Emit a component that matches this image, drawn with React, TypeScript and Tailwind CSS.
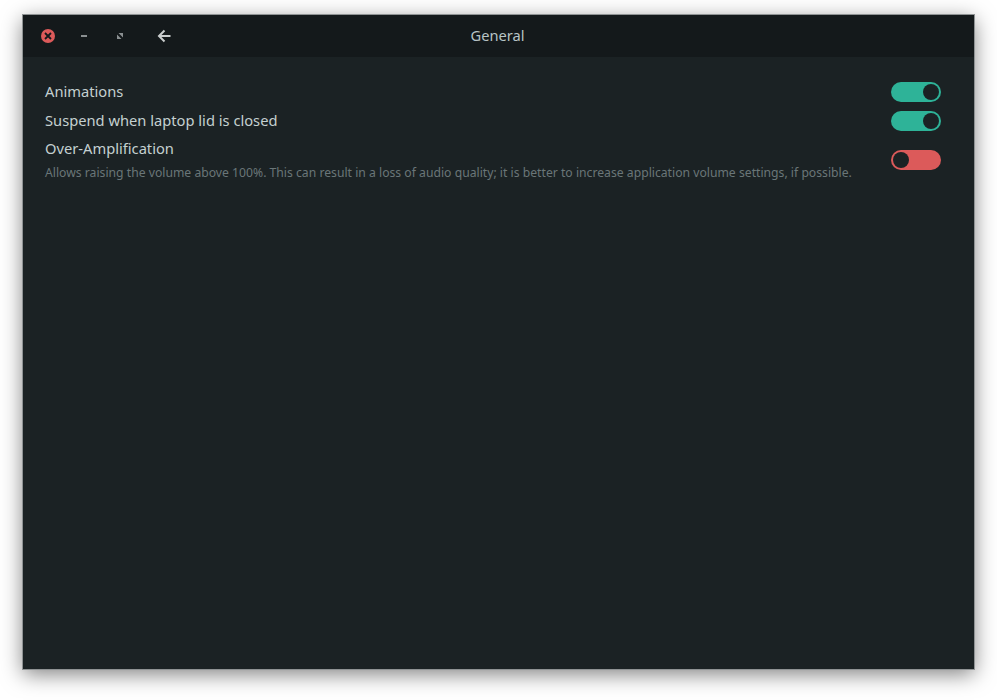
const FONT = "font-['Noto_Sans',sans-serif]";

function Toggle({ on }: { on: boolean }) {
  return (
    <div
      className={`w-[50px] h-5 rounded-full flex items-center px-[2px] ${
        on ? "bg-[#2eb398] justify-end" : "bg-[#dc5a5a] justify-start"
      }`}
    >
      <div className="w-4 h-4 rounded-full bg-[#1b2224]" />
    </div>
  );
}

export default function App() {
  return (
    <div className={`w-[997px] h-[700px] bg-white pt-[15px] pl-[23px] ${FONT}`}>
      <div className="w-[951px] h-[654px] flex flex-col bg-[#1b2224] shadow-[0_5px_20px_rgba(0,0,0,0.5)] outline outline-1 outline-[#8f9394]">
        {/* Header */}
        <div className="h-[42px] shrink-0 bg-[#14191b] flex items-center relative">
          <div className="flex items-center pl-[18px]">
            <div className="w-3.5 h-3.5 rounded-full bg-[#dc5a5a] flex items-center justify-center">
              <svg width="8" height="8" viewBox="0 0 8 8" fill="none" stroke="#14191b" strokeWidth="1.8">
                <path d="M1 1l6 6M7 1L1 7" />
              </svg>
            </div>
            <div className="ml-[26px] w-[6px] h-[2px] bg-[#8a8f91]" />
            <svg className="ml-[30px]" width="6" height="6" viewBox="0 0 6 6" fill="#8a8f91">
              <path d="M0 6V1.5L4.5 6zM6 0v4.5L1.5 0z" />
            </svg>
            <svg className="ml-[34px]" width="14" height="14" viewBox="0 0 14 14" fill="none" stroke="#c9cdcd" strokeWidth="2">
              <path d="M13.5 7H2.5M7.5 1.5L2 7l5.5 5.5" />
            </svg>
          </div>
          <div className="absolute inset-x-0 -top-px h-[42px] pr-[2px] flex items-center justify-center text-[14.67px] text-[#b8c4c6]">General</div>
        </div>

        {/* Settings */}
        <div className="pt-[25px] pl-[22px] pr-[33px] flex flex-col text-[#c4d0d0]">
          <div className="h-[20px] flex items-center justify-between">
            <span className="text-[14.7px] leading-5 -translate-y-px">Animations</span>
            <Toggle on />
          </div>
          <div className="h-[20px] mt-[9px] flex items-center justify-between">
            <span className="text-[14.7px] leading-5 -translate-y-px">Suspend when laptop lid is closed</span>
            <Toggle on />
          </div>
          <div className="mt-[7px] flex items-center justify-between">
            <div>
              <div className="text-[14.7px] leading-5">Over-Amplification</div>
              <div className="mt-[7px] text-[12.2px] leading-4 text-[#6a7678]">
                Allows raising the volume above 100%. This can result in a loss of audio quality; it is better to increase application volume settings, if possible.
              </div>
            </div>
            <Toggle on={false} />
          </div>
        </div>
      </div>
    </div>
  );
}
